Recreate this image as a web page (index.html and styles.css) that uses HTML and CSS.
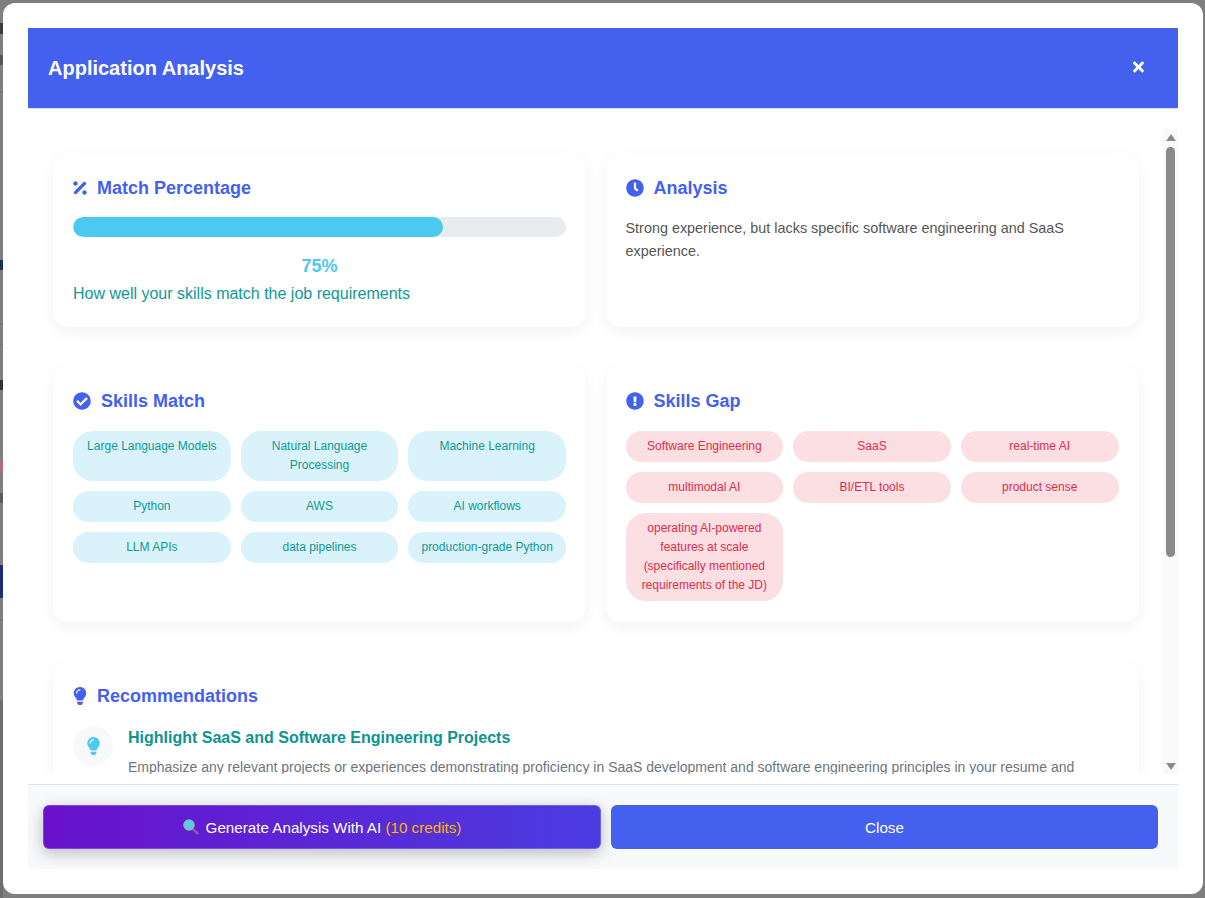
FILE: index.html
```html
<!DOCTYPE html>
<html lang="en">

<head>
    <meta charset="UTF-8">
    <meta name="viewport" content="width=device-width, initial-scale=1.0">
    <title>Application Analysis</title>
    <link rel="stylesheet" href="styles.css">
</head>

<body>
    <!-- page behind the overlay, only a sliver shows on the left -->
    <div class="behind"></div>

    <div class="modal">
        <div class="modal-header">
            <h2>Application Analysis</h2>
            <svg class="close-x" viewBox="0 0 352 512"><path d="M242.72 256l100.07-100.07c12.28-12.28 12.28-32.19 0-44.48l-22.24-22.24c-12.28-12.28-32.19-12.28-44.48 0L176 189.28 75.93 89.21c-12.28-12.28-32.19-12.28-44.48 0L9.21 111.45c-12.28 12.28-12.28 32.19 0 44.48L109.28 256 9.21 356.07c-12.28 12.28-12.28 32.19 0 44.48l22.24 22.24c12.28 12.28 32.2 12.28 44.48 0L176 322.72l100.07 100.07c12.28 12.28 32.2 12.28 44.48 0l22.24-22.24c12.28-12.28 12.28-32.19 0-44.48L242.72 256z"/></svg>
        </div>

        <div class="modal-body">
            <div class="scroll-content">
                <div class="row">
                    <div class="card match-card">
                        <h3 class="card-title">
                            <svg class="icon icon-narrow" viewBox="0 0 384 512"><path d="M109.25 173.25c24.99-24.99 24.99-65.52 0-90.51-24.99-24.99-65.52-24.99-90.51 0-24.99 24.99-24.99 65.52 0 90.51 25 25 65.52 25 90.51 0zm256 165.49c-24.99-24.99-65.52-24.99-90.51 0-24.99 24.99-24.99 65.52 0 90.51 24.99 24.99 65.52 24.99 90.51 0 25-24.99 25-65.51 0-90.51zm-1.94-231.43l-22.62-22.63c-12.5-12.5-32.76-12.5-45.25 0L20.69 359.44c-12.5 12.5-12.5 32.76 0 45.25l22.62 22.63c12.5 12.5 32.76 12.5 45.25 0l274.75-274.75c12.5-12.49 12.5-32.75 0-45.26z"/></svg>
                            Match Percentage
                        </h3>
                        <div class="progress">
                            <div class="progress-fill" style="width: 75%"></div>
                        </div>
                        <div class="percent">75%</div>
                        <p class="match-note">How well your skills match the job requirements</p>
                    </div>

                    <div class="card">
                        <h3 class="card-title">
                            <svg class="icon" viewBox="0 0 512 512"><path d="M256,8C119,8,8,119,8,256S119,504,256,504,504,393,504,256,393,8,256,8Zm92.49,313h0l-20,25a16,16,0,0,1-22.49,2.5h0l-67-49.72a40,40,0,0,1-15-31.23V112a16,16,0,0,1,16-16h32a16,16,0,0,1,16,16V256l58,42.5A16,16,0,0,1,348.49,321Z"/></svg>
                            Analysis
                        </h3>
                        <p class="analysis-text">Strong experience, but lacks specific software engineering and SaaS experience.</p>
                    </div>
                </div>

                <div class="row skills-row">
                    <div class="card">
                        <h3 class="card-title">
                            <svg class="icon" viewBox="0 0 512 512"><path d="M504 256c0 136.967-111.033 248-248 248S8 392.967 8 256 119.033 8 256 8s248 111.033 248 248zM227.314 387.314l184-184c6.248-6.248 6.248-16.379 0-22.627l-22.627-22.627c-6.248-6.249-16.379-6.249-22.628 0L216 308.118l-70.059-70.059c-6.248-6.248-16.379-6.248-22.628 0l-22.627 22.627c-6.248 6.248-6.248 16.379 0 22.627l104 104c6.249 6.249 16.379 6.249 22.628.001z"/></svg>
                            Skills Match
                        </h3>
                        <div class="chips">
                            <span class="chip">Large Language Models</span>
                            <span class="chip">Natural Language Processing</span>
                            <span class="chip">Machine Learning</span>
                            <span class="chip">Python</span>
                            <span class="chip">AWS</span>
                            <span class="chip">AI workflows</span>
                            <span class="chip">LLM APIs</span>
                            <span class="chip">data pipelines</span>
                            <span class="chip">production-grade Python</span>
                        </div>
                    </div>

                    <div class="card">
                        <h3 class="card-title">
                            <svg class="icon" viewBox="0 0 512 512"><path d="M504 256c0 136.997-111.043 248-248 248S8 392.997 8 256C8 119.083 119.043 8 256 8s248 111.083 248 248zm-248 50c-25.405 0-46 20.595-46 46s20.595 46 46 46 46-20.595 46-46-20.595-46-46-46zm-43.673-165.346l7.418 136c.347 6.364 5.609 11.346 11.982 11.346h48.546c6.373 0 11.635-4.982 11.982-11.346l7.418-136c.375-6.874-5.098-12.654-11.982-12.654h-63.383c-6.884 0-12.356 5.78-11.981 12.654z"/></svg>
                            Skills Gap
                        </h3>
                        <div class="chips">
                            <span class="chip chip-gap">Software Engineering</span>
                            <span class="chip chip-gap">SaaS</span>
                            <span class="chip chip-gap">real-time AI</span>
                            <span class="chip chip-gap">multimodal AI</span>
                            <span class="chip chip-gap">BI/ETL tools</span>
                            <span class="chip chip-gap">product sense</span>
                            <span class="chip chip-gap">operating AI-powered features at scale (specifically mentioned requirements of the JD)</span>
                        </div>
                    </div>
                </div>

                <div class="card rec-card">
                    <h3 class="card-title">
                        <svg class="icon icon-narrow" viewBox="0 0 352 512"><path d="M96.06 454.35c.01 6.29 1.87 12.45 5.36 17.69l17.09 25.69a31.99 31.99 0 0 0 26.64 14.28h61.71a31.99 31.99 0 0 0 26.64-14.28l17.09-25.69a31.989 31.989 0 0 0 5.36-17.69l.04-38.35H96.01l.05 38.35zM0 176c0 44.37 16.45 84.85 43.56 115.78 16.52 18.85 42.36 58.23 52.21 91.45.04.26.07.52.11.78h160.24c.04-.26.07-.51.11-.78 9.85-33.22 35.69-72.6 52.21-91.45C335.55 260.85 352 220.37 352 176 352 78.61 272.91-.3 175.45 0 73.44.31 0 82.97 0 176zm176-80c-44.11 0-80 35.89-80 80 0 8.84-7.16 16-16 16s-16-7.16-16-16c0-61.76 50.24-112 112-112 8.84 0 16 7.16 16 16s-7.16 16-16 16z"/></svg>
                        Recommendations
                    </h3>
                    <div class="rec-item">
                        <div class="rec-icon">
                            <svg viewBox="0 0 352 512"><path d="M96.06 454.35c.01 6.29 1.87 12.45 5.36 17.69l17.09 25.69a31.99 31.99 0 0 0 26.64 14.28h61.71a31.99 31.99 0 0 0 26.64-14.28l17.09-25.69a31.989 31.989 0 0 0 5.36-17.69l.04-38.35H96.01l.05 38.35zM0 176c0 44.37 16.45 84.85 43.56 115.78 16.52 18.85 42.36 58.23 52.21 91.45.04.26.07.52.11.78h160.24c.04-.26.07-.51.11-.78 9.85-33.22 35.69-72.6 52.21-91.45C335.55 260.85 352 220.37 352 176 352 78.61 272.91-.3 175.45 0 73.44.31 0 82.97 0 176zm176-80c-44.11 0-80 35.89-80 80 0 8.84-7.16 16-16 16s-16-7.16-16-16c0-61.76 50.24-112 112-112 8.84 0 16 7.16 16 16s-7.16 16-16 16z"/></svg>
                        </div>
                        <div>
                            <h4>Highlight SaaS and Software Engineering Projects</h4>
                            <p>Emphasize any relevant projects or experiences demonstrating proficiency in SaaS development and software engineering principles in your resume and</p>
                        </div>
                    </div>
                </div>
            </div>

            <div class="scrollbar">
                <span class="arrow-up"></span>
                <div class="thumb"></div>
                <span class="arrow-down"></span>
            </div>
        </div>

        <div class="modal-footer">
            <button class="btn btn-generate">
                <svg class="glass" viewBox="0 0 16 16">
                    <path d="M10 10l4.5 4.5" stroke="#9a5a9a" stroke-width="2.4" stroke-linecap="round" />
                    <circle cx="6" cy="6" r="5.2" fill="#5ccbe6" stroke="#8fb0cc" stroke-width="1.1" />
                </svg>
                <span>Generate Analysis With AI <span class="credits">(10 credits)</span></span>
            </button>
            <button class="btn btn-close">Close</button>
        </div>
    </div>
</body>

</html>
```

FILE: styles.css
```css
* {
    box-sizing: border-box;
}

html,
body {
    height: 100%;
}

body {
    margin: 0;
    padding: 3px 2px 4px 3px;
    background: #7f7f7f;
    font-family: "Liberation Sans", Arial, sans-serif;
    overflow: hidden;
}

.behind {
    position: absolute;
    left: 0;
    top: 0;
    bottom: 0;
    width: 3px;
    background: linear-gradient(to bottom,
            #7f7f7f 23px, #3a3a3a 23px, #3a3a3a 34px,
            #7f7f7f 34px, #7f7f7f 55px, #555555 55px, #555555 65px,
            #7f7f7f 65px, #7f7f7f 91px, #737373 91px, #737373 92px,
            #7f7f7f 92px, #7f7f7f 260px, #1a2f5c 260px, #1a2f5c 270px,
            #7f7f7f 270px, #7f7f7f 323px, #737373 323px, #737373 324px,
            #7f7f7f 324px, #7f7f7f 344px, #737373 344px, #737373 345px,
            #7f7f7f 345px, #7f7f7f 380px, #333333 380px, #333333 390px,
            #7f7f7f 390px, #7f7f7f 460px, #b56a7c 460px, #b56a7c 472px,
            #7f7f7f 472px, #7f7f7f 493px, #5a5a5a 493px, #5a5a5a 503px,
            #7f7f7f 503px, #7f7f7f 565px, #1c2a78 565px, #1c2a78 598px,
            #7f7f7f 598px, #7f7f7f 620px, #737373 620px, #737373 621px,
            #7f7f7f 621px, #7f7f7f 700px, #6e6e6e 700px);
}

.modal {
    position: relative;
    height: 891px;
    padding: 25px;
    background: white;
    border-radius: 12px;
    display: flex;
    flex-direction: column;
}

.modal-header {
    height: 81px;
    padding: 0 34px 0 20px;
    background: #4361ee;
    background-clip: padding-box;
    border-bottom: 1px solid #dee2e6;
    display: flex;
    align-items: center;
    justify-content: space-between;
    flex-shrink: 0;
}

.modal-header h2 {
    margin: 0;
    color: white;
    font-size: 20px;
    font-weight: bold;
}

.close-x {
    width: 11px;
    height: 16px;
    fill: white;
    margin-top: -2px;
}

.modal-body {
    height: 665px;
    display: flex;
    flex-shrink: 0;
}

.scroll-content {
    flex: 1;
    min-width: 0;
    padding: 44px 24.5px 0 25px;
    overflow: hidden;
}

.scrollbar {
    width: 15px;
    margin-top: 20px;
    background: #fafafa;
    display: flex;
    flex-direction: column;
    align-items: center;
}

.thumb {
    width: 9px;
    height: 410px;
    margin-top: 6px;
    background: #8a8a8a;
    border-radius: 5px;
}

.arrow-up,
.arrow-down {
    width: 0;
    height: 0;
    border-left: 5px solid transparent;
    border-right: 5px solid transparent;
}

.arrow-up {
    margin-top: 5px;
    border-bottom: 7px solid #8a8a8a;
}

.arrow-down {
    margin-top: auto;
    margin-bottom: 4px;
    border-top: 7px solid #8a8a8a;
}

.row {
    display: grid;
    grid-template-columns: 1fr 1fr;
    column-gap: 19.5px;
    margin-bottom: 39px;
}

.skills-row {
    margin-bottom: 40px;
}

.skills-row .card {
    height: 256px;
}

.card {
    padding: 20px;
    background: white;
    border-radius: 15px;
    box-shadow: 0 5px 15px rgba(0, 0, 0, 0.05);
}

.card-title {
    margin: 0 0 15px;
    height: 30px;
    color: #4361ee;
    font-size: 18px;
    font-weight: bold;
    display: flex;
    align-items: center;
    gap: 10px;
}

.icon {
    width: 18px;
    height: 18px;
    fill: #4361ee;
    flex-shrink: 0;
}

.icon-narrow {
    width: 14px;
}

.match-card {
    height: 174px;
}

.progress {
    height: 20px;
    margin-top: -1px;
    background: #e9ecef;
    border-radius: 10px;
    overflow: hidden;
}

.progress-fill {
    height: 100%;
    background: #4cc9f0;
    border-radius: 10px;
}

.percent {
    margin-top: 19px;
    color: #4cc9f0;
    font-size: 18px;
    font-weight: bold;
    line-height: 20px;
    text-align: center;
}

.match-note {
    margin: 8px 0 0;
    color: #0e9a94;
    font-size: 16px;
    line-height: 20px;
}

.analysis-text {
    margin: -1px 0 0;
    color: #555555;
    font-size: 14.4px;
    line-height: 23px;
}

.chips {
    display: grid;
    grid-template-columns: repeat(3, 1fr);
    gap: 10px;
}

.chip {
    padding: 6px 10px;
    background: #daf3fb;
    color: #0e9a94;
    border-radius: 20px;
    font-size: 12px;
    line-height: 19px;
    text-align: center;
}

.chip-gap {
    background: #fbdfe3;
    color: #dc2e4a;
}

.rec-card .card-title {
    margin-top: -1px;
}

.rec-card {
    padding-bottom: 40px;
}

.rec-item {
    display: flex;
    gap: 15px;
}

.rec-icon {
    width: 40px;
    height: 40px;
    background: #f8f9fa;
    border-radius: 50%;
    display: flex;
    align-items: center;
    justify-content: center;
    flex-shrink: 0;
}

.rec-icon svg {
    width: 13px;
    height: 18px;
    fill: #4cc9f0;
}

.rec-item h4 {
    margin: 0;
    color: #0b9490;
    font-size: 16px;
    font-weight: bold;
    line-height: 24px;
}

.rec-item p {
    margin: 6px 0 0;
    color: #6c757d;
    font-size: 14px;
    line-height: 22.4px;
}

.modal-footer {
    height: 85px;
    margin-top: 10px;
    padding: 20px 20px 19px 15px;
    background: #f8f9fa;
    border-top: 1px solid #dee2e6;
    display: flex;
    gap: 10px;
    flex-shrink: 0;
}

.btn {
    height: 44px;
    border: none;
    border-radius: 6px;
    color: white;
    font-family: inherit;
    font-size: 15.2px;
    display: flex;
    align-items: center;
    justify-content: center;
}

.btn-generate {
    width: 558px;
    background: linear-gradient(90deg, #6a11cb, #4a3ce0) border-box;
    border: 1px solid rgba(255, 255, 255, 0.2);
    box-shadow: 0 4px 15px rgba(0, 0, 0, 0.25);
    gap: 7px;
}

.btn-close {
    flex: 1;
    background: #4361ee;
}

.glass {
    width: 16px;
    height: 16px;
}

.credits {
    color: #ffb300;
}
```
